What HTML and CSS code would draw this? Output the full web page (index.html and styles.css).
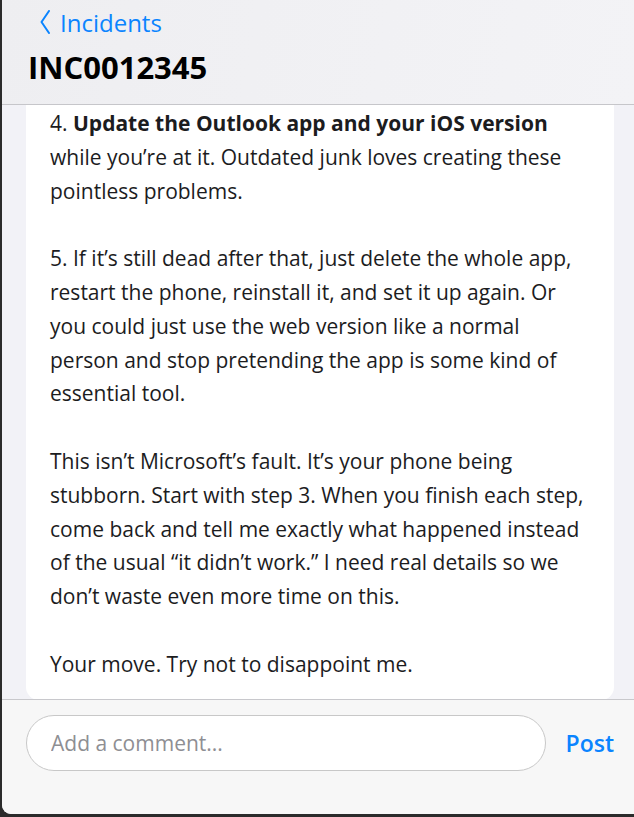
FILE: index.html
```html
<!DOCTYPE html>
<html lang="en">
<head>
    <meta charset="UTF-8">
    <meta name="viewport" content="width=device-width, initial-scale=1.0">
    <title>INC0012345</title>
    <link rel="stylesheet" href="styles.css">
</head>
<body>
    <div class="window">
        <div class="header">
            <a class="back-link" href="#">
                <svg class="chevron" width="12" height="24" viewBox="0 0 12 24"><path d="M10 1 L2.5 12 L10 23" fill="none" stroke="#0a84ff" stroke-width="2" stroke-linecap="round" stroke-linejoin="round"/></svg>
                Incidents
            </a>
            <h1 class="title">INC0012345</h1>
        </div>
        <div class="thread">
            <div class="message-card">
                <p>4. <strong>Update the Outlook app and your iOS version</strong> while you’re at it. Outdated junk loves creating these pointless problems.</p>
                <p>5. If it’s still dead after that, just delete the whole app, restart the phone, reinstall it, and set it up again. Or you could just use the web version like a normal person and stop pretending the app is some kind of essential tool.</p>
                <p>This isn’t Microsoft’s fault. It’s your phone being stubborn. Start with step 3. When you finish each step, come back and tell me exactly what happened instead of the usual “it didn’t work.” I need real details so we don’t waste even more time on this.</p>
                <p>Your move. Try not to disappoint me.</p>
            </div>
        </div>
        <div class="composer">
            <input class="comment-input" type="text" placeholder="Add a comment...">
            <button class="post-btn">Post</button>
        </div>
    </div>
</body>
</html>
```

FILE: styles.css
```css
body {
    margin: 0;
    padding: 0;
    background-color: #2b2b2b;
    font-family: "Segoe UI", "Open Sans", sans-serif;
    height: 100vh;
    overflow: hidden;
}
.window {
    margin-left: 2px;
    height: 814px;
    display: flex;
    flex-direction: column;
    background-color: #f2f2f7;
    border-bottom-left-radius: 9px;
    overflow: hidden;
}
.header {
    height: 105px;
    box-sizing: border-box;
    padding: 5px 0 0 26px;
    background: linear-gradient(100deg, #eeeef1 0%, #f3f3f6 100%);
    border-bottom: 1px solid #c6c6ca;
    flex-shrink: 0;
}
.back-link {
    display: flex;
    align-items: center;
    gap: 9px;
    color: #0a84ff;
    text-decoration: none;
    font-size: 24px;
    height: 34px;
    padding-left: 11px;
}
.title {
    margin: 8px 0 0 0;
    font-size: 31px;
    font-weight: 700;
    color: #000;
    line-height: 40px;
}
.thread {
    flex-grow: 1;
    overflow: hidden;
    padding: 0 20px 0 24px;
}
.message-card {
    background-color: #fff;
    border-radius: 0 0 13px 13px;
    padding: 2px 24px 18px 24px;
    color: #1c1c1e;
    font-size: 21px;
    line-height: 33.8px;
}
.message-card p {
    margin: 0 0 33.8px 0;
}
.message-card p:last-child {
    margin-bottom: 0;
}
.composer {
    flex-shrink: 0;
    height: 115px;
    box-sizing: border-box;
    background-color: #f7f7f7;
    border-top: 1px solid #c8c8cc;
    padding: 15px 20px 0 24px;
    display: flex;
    align-items: flex-start;
    gap: 20px;
}
.comment-input {
    flex-grow: 1;
    height: 56px;
    box-sizing: border-box;
    border: 1px solid #c8c8c8;
    border-radius: 28px;
    background-color: #fff;
    padding: 0 24px;
    font-family: inherit;
    font-size: 21px;
    color: #1c1c1e;
    outline: none;
}
.comment-input::placeholder {
    color: #8e8e93;
}
.post-btn {
    background: none;
    border: none;
    padding: 0;
    height: 56px;
    color: #0a84ff;
    font-family: inherit;
    font-size: 23px;
    font-weight: 600;
    cursor: pointer;
}
```
